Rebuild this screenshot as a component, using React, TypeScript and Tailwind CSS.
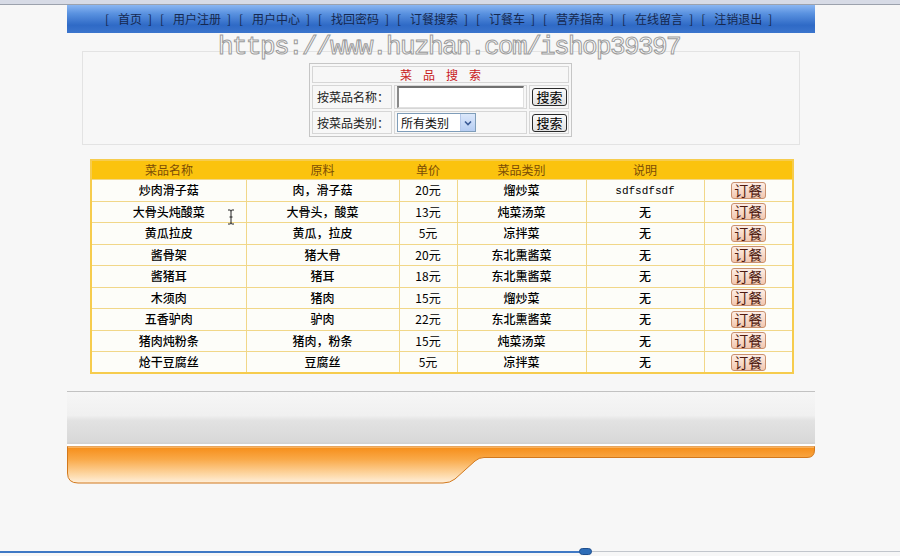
import React from "react";

const navItems = ["首页", "用户注册", "用户中心", "找回密码", "订餐搜索", "订餐车", "营养指南", "在线留言", "注销退出"];

const rows = [
  ["炒肉滑子菇", "肉，滑子菇", "20元", "熘炒菜", "sdfsdfsdf"],
  ["大骨头炖酸菜", "大骨头，酸菜", "13元", "炖菜汤菜", "无"],
  ["黄瓜拉皮", "黄瓜，拉皮", "5元", "凉拌菜", "无"],
  ["酱骨架", "猪大骨", "20元", "东北熏酱菜", "无"],
  ["酱猪耳", "猪耳", "18元", "东北熏酱菜", "无"],
  ["木须肉", "猪肉", "15元", "熘炒菜", "无"],
  ["五香驴肉", "驴肉", "22元", "东北熏酱菜", "无"],
  ["猪肉炖粉条", "猪肉，粉条", "15元", "炖菜汤菜", "无"],
  ["炝干豆腐丝", "豆腐丝", "5元", "凉拌菜", "无"],
];

function SearchButton() {
  return (
    <button className="w-[35px] h-[18px] border border-[#2a2a2a] rounded-[3px] bg-[linear-gradient(to_bottom,#fafafa,#e2e2e2)] text-[13px] leading-[16px] text-black flex items-center justify-center">
      搜索
    </button>
  );
}

export default function App() {
  return (
    <div
      className="relative w-[900px] h-[556px] overflow-hidden bg-[#f7f7f7] text-[12px] text-[#111]"
      style={{ fontFamily: '"Noto Sans CJK SC", "Noto Sans", sans-serif' }}
    >
      {/* top strip */}
      <div className="h-[5px] bg-[#d7dbe6] border-b border-[#9ca2ad]" />

      {/* nav bar */}
      <div className="ml-[67px] w-[748px] h-[28px] bg-[linear-gradient(to_bottom,#8ab6f2_0%,#5a92e0_30%,#2f6ac6_72%,#3b75cd_100%)] flex items-center pl-[38px] gap-[8px] text-[12px] text-[#15284f]">
        {navItems.map((t) => (
          <span key={t} className="flex items-center leading-none">
            <span className="inline-block w-[4px]">[</span>
            <span className="ml-[9px]">{t}</span>
            <span className="ml-[6px] inline-block w-[4px]">]</span>
          </span>
        ))}
      </div>

      {/* search panel */}
      <div className="ml-[82px] mt-[18px] w-[718px] h-[94px] border border-[#e3e3e3] bg-[#f7f7f7] pt-[11px] pl-[226px]">
        <table className="border border-[#c6c6c6] border-separate border-spacing-[2px] text-[12px]">
          <tbody>
            <tr>
              <td colSpan={3} className="h-[17px] border border-[#d6d6d6] text-center text-[#c8201c] leading-none">
                <span className="tracking-[11px] pl-[11px]">菜品搜索</span>
              </td>
            </tr>
            <tr>
              <td className="w-[80px] h-[24px] border border-[#d6d6d6] text-right pr-[2px] text-[#222]">按菜品名称：</td>
              <td className="w-[131px] border border-[#d6d6d6] px-[2px]">
                <div className="w-[127px] h-[22px] bg-white border-t-2 border-l-2 border-t-[#707070] border-l-[#8a8a8a] border-b border-r border-b-[#e0e0e0] border-r-[#e0e0e0]" />
              </td>
              <td className="w-[40px] border border-[#d6d6d6] pl-[2px]">
                <SearchButton />
              </td>
            </tr>
            <tr>
              <td className="h-[23px] border border-[#d6d6d6] text-right pr-[2px] text-[#222]">按菜品类别：</td>
              <td className="border border-[#d6d6d6] px-[2px]">
                <div className="w-[79px] h-[19px] bg-white border border-[#7f9db9] flex items-center justify-between">
                  <span className="pl-[3px] text-[12px] text-[#111] leading-none">所有类别</span>
                  <span className="w-[15px] h-[17px] bg-[linear-gradient(to_bottom,#dce8fb,#b6cdf2)] border-l border-[#b4c8ea] flex items-center justify-center">
                    <svg width="8" height="6" viewBox="0 0 8 6">
                      <path d="M1 1.5 L4 4.5 L7 1.5" fill="none" stroke="#3a5a96" strokeWidth="1.6" />
                    </svg>
                  </span>
                </div>
              </td>
              <td className="border border-[#d6d6d6] pl-[2px]">
                <SearchButton />
              </td>
            </tr>
          </tbody>
        </table>
      </div>

      {/* menu table */}
      <div className="ml-[90px] mt-[14px] w-[702px]">
        <table className="w-[702px] border-collapse border-2 border-[#f6cc4e] text-[12px] table-fixed">
          <colgroup>
            <col className="w-[155px]" />
            <col className="w-[153px]" />
            <col className="w-[58px]" />
            <col className="w-[129px]" />
            <col className="w-[118px]" />
            <col className="w-[89px]" />
          </colgroup>
          <thead>
            <tr className="h-[19px] bg-[#fbc30e] text-[#7a4c06]">
              <th className="font-normal">菜品名称</th>
              <th className="font-normal">原料</th>
              <th className="font-normal">单价</th>
              <th className="font-normal">菜品类别</th>
              <th className="font-normal">说明</th>
              <th className="font-normal"></th>
            </tr>
          </thead>
          <tbody>
            {rows.map((r, i) => (
              <tr key={i} className="h-[21.5px] bg-[#fdfdf9] font-medium text-black">
                <td className="border border-[#f1d789] text-center leading-none">{r[0]}</td>
                <td className="border border-[#f1d789] text-center leading-none">{r[1]}</td>
                <td className="border border-[#f1d789] text-center leading-none font-normal">{r[2]}</td>
                <td className="border border-[#f1d789] text-center leading-none">{r[3]}</td>
                <td className="border border-[#f1d789] text-center leading-none">
                  {r[4] === "无" ? (
                    r[4]
                  ) : (
                    <span className="text-[11px] font-normal" style={{ fontFamily: '"Liberation Mono", monospace' }}>
                      {r[4]}
                    </span>
                  )}
                </td>
                <td className="border border-[#f1d789] leading-none">
                  <div className="flex justify-center">
                    <span className="w-[35px] h-[17px] rounded-[3px] border border-[#c9906e] bg-[linear-gradient(to_bottom,#fdeee6,#f2c7b0)] text-[14px] leading-[15px] font-normal text-[#4e1a10] flex items-center justify-center">
                      订餐
                    </span>
                  </div>
                </td>
              </tr>
            ))}
          </tbody>
        </table>
      </div>

      {/* footer */}
      <div className="ml-[67px] mt-[17px] w-[748px]">
        <div className="h-[53px] border-t border-[#c2c2c2] bg-[linear-gradient(to_bottom,#f6f6f6_0%,#f0f0f0_45%,#e2e2e2_55%,#d8d8d8_95%,#d0d0d0_100%)]" />
        <div className="h-[2px] bg-white" />
        <svg width="748" height="38" viewBox="0 0 748 38" className="block">
          <defs>
            <linearGradient id="og" x1="0" y1="0" x2="0" y2="1">
              <stop offset="0" stopColor="#f68c16" />
              <stop offset="0.35" stopColor="#f9a948" />
              <stop offset="0.75" stopColor="#fdd6a2" />
              <stop offset="1" stopColor="#fff0dc" />
            </linearGradient>
          </defs>
          <path
            d="M0.5 0.5 H747.5 V4 Q747.5 11.5 740 11.5 H417 Q412 11.5 408 15 L388 33 Q383 37 376 37 H11 Q0.5 37 0.5 27 Z"
            fill="url(#og)"
            stroke="#d2781c"
            strokeWidth="1"
          />
          <path d="M1 1 H747" stroke="#fbd3a0" strokeWidth="1" />
        </svg>
      </div>

      {/* watermark */}
      <div
        className="absolute left-[218px] top-[33px] text-[26px] leading-[28px] tracking-[-1.6px] text-[#fbfbfb] [-webkit-text-stroke:1px_#9c9c9c] whitespace-nowrap"
        style={{ fontFamily: '"Liberation Mono", "DejaVu Sans Mono", monospace' }}
      >
        https://www.huzhan.com/ishop39397
      </div>

      {/* I-beam cursor */}
      <svg className="absolute left-[227px] top-[209px]" width="8" height="16" viewBox="0 0 8 16">
        <path d="M1 1 H3 Q4 1 4 2.5 V13.5 Q4 15 3 15 H1 M7 1 H5 Q4 1 4 2.5 M4 13.5 Q4 15 5 15 H7 M2.5 8 H5.5" fill="none" stroke="#222" strokeWidth="1" />
      </svg>

      {/* bottom progress bar */}
      <div className="absolute left-0 top-[551px] w-[585px] h-[2px] bg-[#3f78c4]" />
      <div className="absolute left-[585px] top-[551px] w-[315px] h-[1px] bg-[#c2c6cc]" />
      <div className="absolute left-[579px] top-[548px] w-[13px] h-[7px] rounded-full bg-[#2e6db8] border border-[#1e4f8e]" />
    </div>
  );
}
